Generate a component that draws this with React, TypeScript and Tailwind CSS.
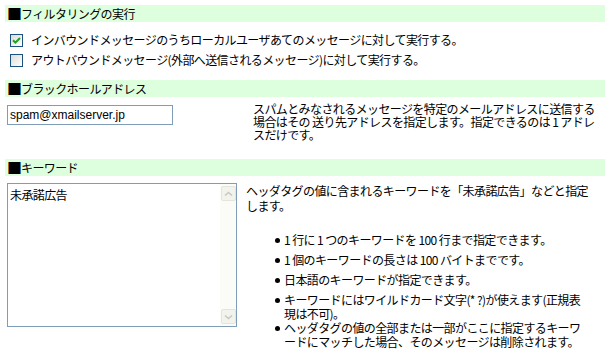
import type { ReactNode } from "react";

const font = "font-['MS_UI_Gothic','Noto_Sans_CJK_JP',sans-serif]";

function SectionHeader({ children }: { children: ReactNode }) {
  return (
    <div className="flex h-[17px] items-center bg-[#ddffdd] pl-[2px] text-[12px] leading-none tracking-[-0.6px] text-black">
      <span className="text-[15px] leading-none tracking-[-1px]">■</span>
      {children}
    </div>
  );
}

function Checkbox({ checked }: { checked?: boolean }) {
  return (
    <span className="flex h-[13px] w-[13px] shrink-0 items-center justify-center border border-[#1c5180] bg-gradient-to-br from-[#dcdcd7] to-white">
      {checked ? (
        <svg width="9" height="9" viewBox="0 0 9 9" aria-hidden>
          <path d="M1 4.2 L3.4 6.6 L8 2" fill="none" stroke="#21a121" strokeWidth="2" />
        </svg>
      ) : null}
    </span>
  );
}

function ScrollButton({ down }: { down?: boolean }) {
  return (
    <div className="flex h-[15px] w-[15px] items-center justify-center rounded-[2px] border border-[#e6e5dc] bg-[#f3f3ee]">
      <svg width="9" height="6" viewBox="0 0 9 6" aria-hidden>
        <path
          d={down ? "M1 1.5 L4.5 4.5 L8 1.5" : "M1 4.5 L4.5 1.5 L8 4.5"}
          fill="none"
          stroke="#c8c8bf"
          strokeWidth="1.6"
        />
      </svg>
    </div>
  );
}

const bullets: { lines: string[]; tight?: boolean }[] = [
  { lines: ["1 行に 1 つのキーワードを 100 行まで指定できます。"] },
  { lines: ["1 個のキーワードの長さは 100 バイトまでです。"] },
  { lines: ["日本語のキーワードが指定できます。"] },
  { lines: ["キーワードにはワイルドカード文字(* ?)が使えます(正規表", "現は不可)。"] },
  { lines: ["ヘッダタグの値の全部または一部がここに指定するキーワ", "ードにマッチした場合、そのメッセージは削除されます。"], tight: true }
];

export default function App() {
  return (
    <div className={`h-[355px] w-[612px] overflow-hidden bg-white ${font} text-[12px] tracking-[-0.6px] text-black`}>
      <div className="ml-[5px] w-[600px] pt-[5px]">
        <SectionHeader>フィルタリングの実行</SectionHeader>
        <div className="mt-[8px] pl-[5px]">
          <label className="flex h-[20px] items-center gap-[8px]">
            <Checkbox checked />
            <span>インバウンドメッセージのうちローカルユーザあてのメッセージに対して実行する。</span>
          </label>
          <label className="flex h-[20px] items-center gap-[8px]">
            <Checkbox />
            <span>アウトバウンドメッセージ(外部へ送信されるメッセージ)に対して実行する。</span>
          </label>
        </div>

        <div className="mt-[10px]">
          <SectionHeader>ブラックホールアドレス</SectionHeader>
        </div>
        <div className="mt-[8px] flex pl-[2px]">
          <div className="w-[246px] shrink-0">
            <div className="flex h-[20px] w-[166px] items-center border border-[#7f9db9] px-[2px] font-['Liberation_Sans',sans-serif] text-[12px] tracking-normal">
              spam@xmailserver.jp
            </div>
          </div>
          <p className="mt-[-3px] leading-[13px]">
            スパムとみなされるメッセージを特定のメールアドレスに送信する
            <br />
            場合はその 送り先アドレスを指定します。指定できるのは 1 アドレ
            <br />
            スだけです。
          </p>
        </div>

        <div className="mt-[18px]">
          <SectionHeader>キーワード</SectionHeader>
        </div>
        <div className="mt-[7px] flex pl-[2px]">
          <div className="flex h-[144px] w-[230px] shrink-0 border border-[#7f9db9]">
            <textarea
              className="h-full flex-1 resize-none overflow-hidden px-[2px] py-[3px] text-[12px] leading-[15px] outline-none"
              defaultValue="未承諾広告"
            />
            <div className="flex w-[16px] flex-col justify-between bg-[#fbfbf8] px-[1px] py-[2px]">
              <ScrollButton />
              <ScrollButton down />
            </div>
          </div>
          <div className="ml-[9px]">
            <p className="leading-[15px]">
              ヘッダタグの値に含まれるキーワードを「未承諾広告」などと指定
              <br />
              します。
            </p>
            <ul className="mt-[20px]">
              {bullets.map((item, i) => (
                <li
                  key={i}
                  className={`flex leading-[14px] ${i === 0 || item.tight ? "" : "mt-[6px]"}`}
                >
                  <span className="ml-[29px] mr-[4px] mt-[5px] h-[5px] w-[5px] shrink-0 rounded-full bg-black" />
                  <span>
                    {item.lines.map((line, j) => (
                      <span key={j} className="block">
                        {line}
                      </span>
                    ))}
                  </span>
                </li>
              ))}
            </ul>
          </div>
        </div>
      </div>
    </div>
  );
}
